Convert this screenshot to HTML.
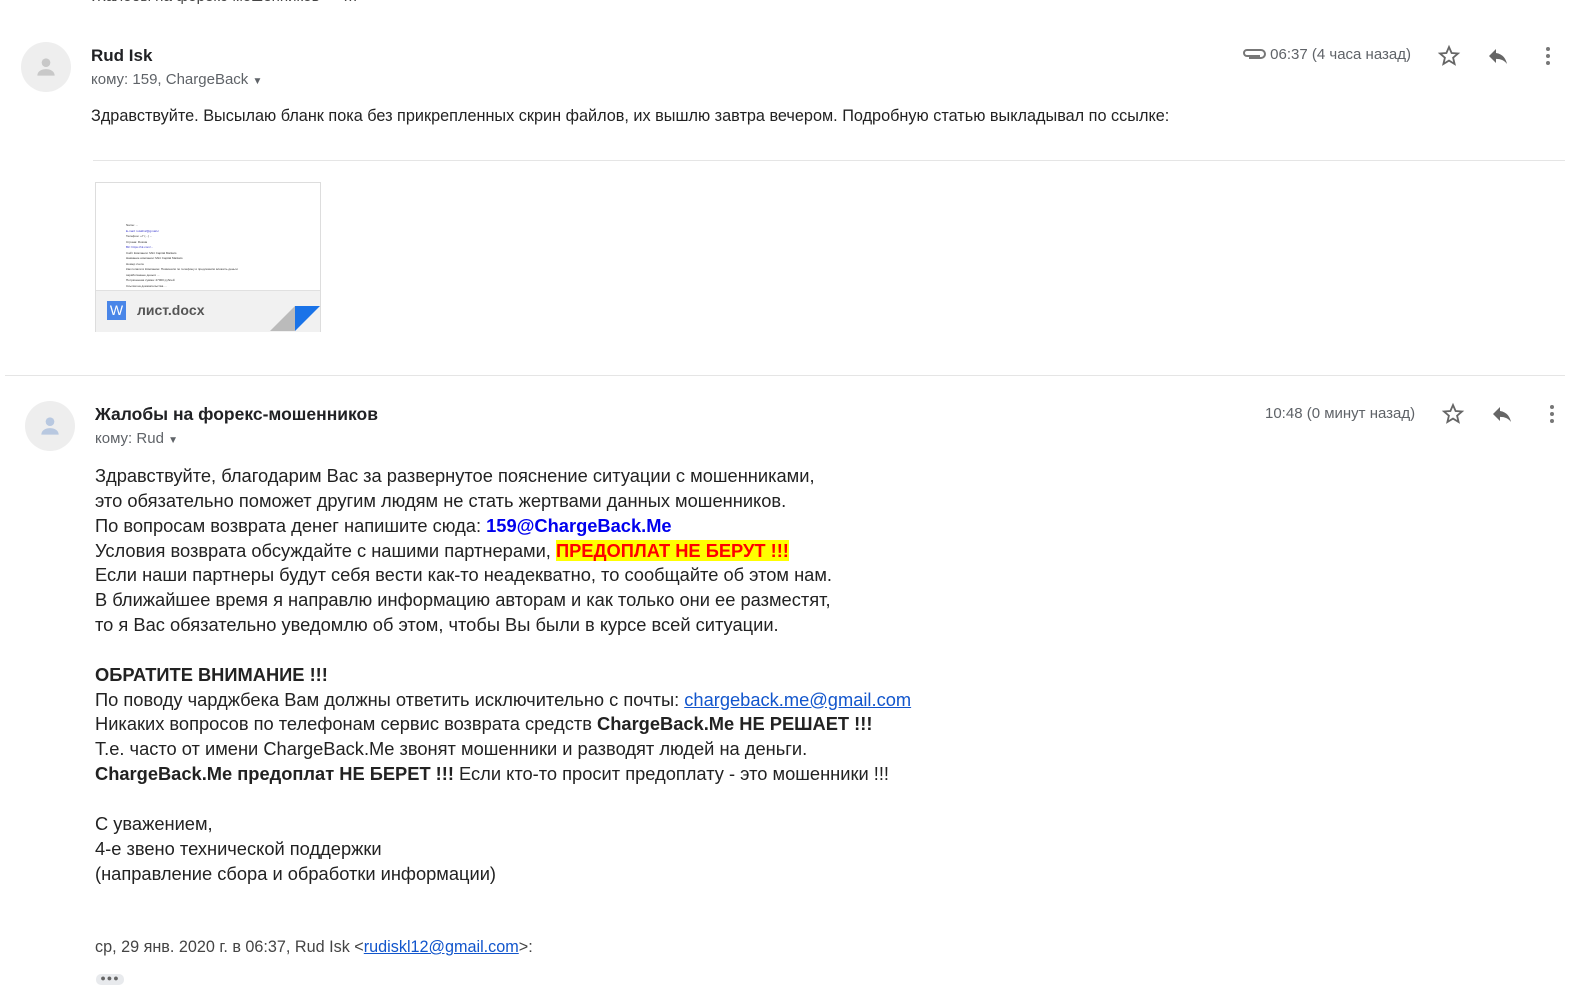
<!DOCTYPE html>
<html><head><meta charset="utf-8">
<style>
body{margin:0;width:1583px;height:1000px;background:#fff;font-family:"Liberation Sans",Arial,sans-serif;position:relative;overflow:hidden;color:#222}
.a{position:absolute}
.av{border-radius:50%;background:#eeeeee;width:50px;height:50px}
.name{font-weight:bold;font-size:17px;color:#202124}
.to{font-size:15px;color:#5f6368}
.gray{color:#5f6368;font-size:15px}
.body2{font-size:18.3px;line-height:24.85px;color:#222}
a{color:#1155cc}
</style></head><body>
<div class="a" style="top:-12px;left:92px;font-size:15px;color:#444">Жалобы на форекс-мошенников — …</div>

<div class="a av" style="left:21px;top:42px"></div>
<svg class="a" style="left:33px;top:54px" width="26" height="26" viewBox="0 0 24 24"><circle cx="12" cy="8" r="4" fill="#c8c8c8"/><path d="M4 20c0-4 4-6 8-6s8 2 8 6z" fill="#c8c8c8"/></svg>
<div class="a name" style="left:91px;top:46px">Rud Isk</div>
<div class="a to" style="left:91px;top:71px">кому: 159, ChargeBack <span style="font-size:10px">▼</span></div>
<div class="a gray" style="left:1242px;top:46px"><svg width="24" height="12" viewBox="0 0 24 12" style="vertical-align:-1px"><path d="M7 10h12a4 4 0 0 0 0-8H5a3 3 0 0 0 0 6h13" fill="none" stroke="#777" stroke-width="2"/></svg> 06:37 (4 часа назад)</div>
<svg class="a" style="left:1437px;top:44px" width="24" height="24" viewBox="0 0 24 24"><path d="M12 3l2.6 6 6.4.5-4.9 4.2 1.5 6.3L12 16.6 6.4 20l1.5-6.3L3 9.5l6.4-.5z" fill="none" stroke="#666" stroke-width="1.8"/></svg>
<svg class="a" style="left:1486px;top:44px" width="24" height="24" viewBox="0 0 24 24"><path d="M10 9V5l-7 7 7 7v-4.1c5 0 8.5 1.6 11 5.1-1-5-4-10-11-11z" fill="#666"/></svg>
<svg class="a" style="left:1536px;top:44px" width="24" height="24" viewBox="0 0 24 24"><circle cx="12" cy="5" r="2" fill="#777"/><circle cx="12" cy="12" r="2" fill="#777"/><circle cx="12" cy="19" r="2" fill="#777"/></svg>
<div class="a" style="left:91px;top:107px;font-size:16.25px;color:#222">Здравствуйте. Высылаю бланк пока без прикрепленных скрин файлов, их вышлю завтра вечером. Подробную статью выкладывал по ссылке:</div>
<div class="a" style="left:93px;top:160px;width:1472px;height:1px;background:#e5e5e5"></div>

<div class="a" style="left:95px;top:182px;width:224px;height:148px;border:1px solid #ddd;background:#fff">
 <div class="a" style="left:30px;top:40px;width:170px;font-size:3px;line-height:5.5px;color:#333">Name: ...<br><span style="color:#33c">E-mail: ruiskl12@gmail.c</span><br>Телефон: +7 (...) ...<br>Страна: Russia<br><span style="color:#33c">ВК: https://vk.com/...</span><br>Сайт Компании: Mint Capital Markets<br>Название компании: Mint Capital Markets<br>Номер счета<br>Как попали в Компанию: Позвонили по телефону и предложили вложить деньги<br>заработанные деньги ...<br>Потраченная сумма: 27000 рублей<br>Ссылки на доказательства ...</div>
 <div class="a" style="left:0;top:107px;width:224px;height:41px;background:#f1f1f1;border-top:1px solid #e0e0e0"></div>
 <div class="a" style="left:11px;top:118px;width:19px;height:19px;background:#4a86e8;color:#fff;font-size:14px;text-align:center;line-height:19px">W</div>
 <div class="a" style="left:41px;top:119px;font-size:14px;font-weight:bold;color:#555">лист.docx</div>
 <svg class="a" style="left:174px;top:123px" width="50" height="25"><polygon points="0,25 25,0 25,25" fill="#bbb"/><polygon points="25,0 50,0 25,25" fill="#1a73e8"/></svg>
</div>

<div class="a" style="left:5px;top:375px;width:1560px;height:1px;background:#e5e5e5"></div>

<div class="a av" style="left:25px;top:401px"></div>
<svg class="a" style="left:37px;top:413px" width="26" height="26" viewBox="0 0 24 24"><circle cx="12" cy="8" r="4" fill="#b8c8e0"/><path d="M4 20c0-4 4-6 8-6s8 2 8 6z" fill="#b8c8e0"/></svg>
<div class="a name" style="left:95px;top:404px;font-size:17.5px">Жалобы на форекс-мошенников</div>
<div class="a to" style="left:95px;top:430px">кому: Rud <span style="font-size:10px">▼</span></div>
<div class="a gray" style="left:1265px;top:405px">10:48 (0 минут назад)</div>
<svg class="a" style="left:1441px;top:402px" width="24" height="24" viewBox="0 0 24 24"><path d="M12 3l2.6 6 6.4.5-4.9 4.2 1.5 6.3L12 16.6 6.4 20l1.5-6.3L3 9.5l6.4-.5z" fill="none" stroke="#666" stroke-width="1.8"/></svg>
<svg class="a" style="left:1490px;top:402px" width="24" height="24" viewBox="0 0 24 24"><path d="M10 9V5l-7 7 7 7v-4.1c5 0 8.5 1.6 11 5.1-1-5-4-10-11-11z" fill="#666"/></svg>
<svg class="a" style="left:1540px;top:402px" width="24" height="24" viewBox="0 0 24 24"><circle cx="12" cy="5" r="2" fill="#777"/><circle cx="12" cy="12" r="2" fill="#777"/><circle cx="12" cy="19" r="2" fill="#777"/></svg>

<div class="a body2" style="left:95px;top:464px;white-space:nowrap">
Здравствуйте, благодарим Вас за развернутое пояснение ситуации с мошенниками,<br>
это обязательно поможет другим людям не стать жертвами данных мошенников.<br>
По вопросам возврата денег напишите сюда: <b style="color:#0000ee">159@ChargeBack.Me</b><br>
Условия возврата обсуждайте с нашими партнерами, <b style="color:#f00;background:#ff0">ПРЕДОПЛАТ НЕ БЕРУТ !!!</b><br>
Если наши партнеры будут себя вести как-то неадекватно, то сообщайте об этом нам.<br>
В ближайшее время я направлю информацию авторам и как только они ее разместят,<br>
то я Вас обязательно уведомлю об этом, чтобы Вы были в курсе всей ситуации.<br>
<br>
<b>ОБРАТИТЕ ВНИМАНИЕ !!!</b><br>
По поводу чарджбека Вам должны ответить исключительно с почты: <a style="text-decoration:underline">chargeback.me@gmail.com</a><br>
Никаких вопросов по телефонам сервис возврата средств <b>ChargeBack.Me НЕ РЕШАЕТ !!!</b><br>
Т.е. часто от имени ChargeBack.Me звонят мошенники и разводят людей на деньги.<br>
<b>ChargeBack.Me предоплат НЕ БЕРЕТ !!!</b> Если кто-то просит предоплату - это мошенники !!!<br>
<br>
С уважением,<br>
4-е звено технической поддержки<br>
(направление сбора и обработки информации)
</div>
<div class="a" style="left:95px;top:938px;font-size:16.2px;color:#444">ср, 29 янв. 2020 г. в 06:37, Rud Isk &lt;<a style="text-decoration:underline">rudiskl12@gmail.com</a>&gt;:</div>
<div class="a" style="left:96px;top:974px;width:28px;height:11px;background:#e8eaed;border-radius:5px;font-size:9px;line-height:9px;text-align:center;color:#666;letter-spacing:1px">●●●</div>
</body></html>
